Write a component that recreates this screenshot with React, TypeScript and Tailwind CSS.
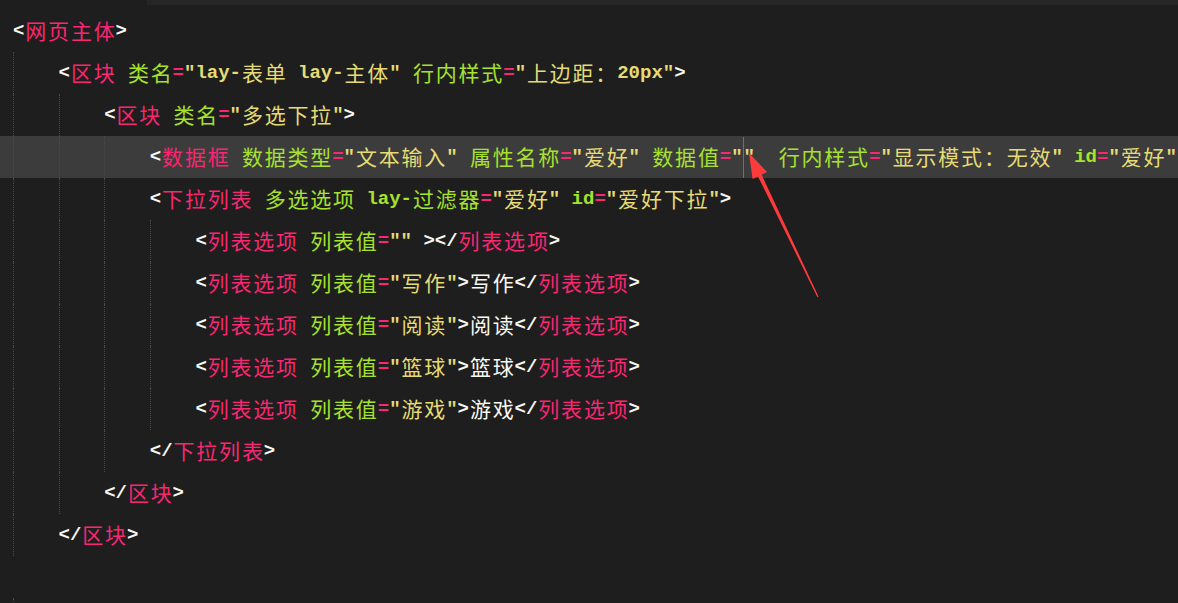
type Kind = "p" | "t" | "a" | "e" | "s" | "x" | "c";
type Tok = [Kind, string];

type Line = {
  level: number;
  guides: number;
  active?: boolean;
  toks: Tok[];
};

const colors: Record<Kind, string> = {
  p: "text-[#f8f8f2]",
  t: "text-[#f92672]",
  a: "text-[#a6e22e]",
  e: "text-[#f92672]",
  s: "text-[#e6db74]",
  x: "text-[#f8f8f2]",
  c: "",
};

const isWide = (ch: string) => /[\u3000-\u9fff\uff00-\uffef]/.test(ch);

const option = (v: string): Tok[] => [
  ["p", "<"],
  ["t", "列表选项"],
  ["p", " "],
  ["a", "列表值"],
  ["e", "="],
  ["s", `"${v}"`],
  ["p", ">"],
  ["x", v],
  ["p", "</"],
  ["t", "列表选项"],
  ["p", ">"],
];

const lines: Line[] = [
  { level: 0, guides: 0, toks: [["p", "<"], ["t", "网页主体"], ["p", ">"]] },
  {
    level: 1,
    guides: 1,
    toks: [
      ["p", "<"],
      ["t", "区块"],
      ["p", " "],
      ["a", "类名"],
      ["e", "="],
      ["s", '"lay-表单 lay-主体"'],
      ["p", " "],
      ["a", "行内样式"],
      ["e", "="],
      ["s", '"上边距：20px"'],
      ["p", ">"],
    ],
  },
  {
    level: 2,
    guides: 2,
    toks: [["p", "<"], ["t", "区块"], ["p", " "], ["a", "类名"], ["e", "="], ["s", '"多选下拉"'], ["p", ">"]],
  },
  {
    level: 3,
    guides: 3,
    active: true,
    toks: [
      ["p", "<"],
      ["t", "数据框"],
      ["p", " "],
      ["a", "数据类型"],
      ["e", "="],
      ["s", '"文本输入"'],
      ["p", " "],
      ["a", "属性名称"],
      ["e", "="],
      ["s", '"爱好"'],
      ["p", " "],
      ["a", "数据值"],
      ["e", "="],
      ["s", '"'],
      ["c", ""],
      ["s", '"'],
      ["p", "  "],
      ["a", "行内样式"],
      ["e", "="],
      ["s", '"显示模式：无效"'],
      ["p", " "],
      ["a", "id"],
      ["e", "="],
      ["s", '"爱好"'],
    ],
  },
  {
    level: 3,
    guides: 3,
    toks: [
      ["p", "<"],
      ["t", "下拉列表"],
      ["p", " "],
      ["a", "多选选项"],
      ["p", " "],
      ["a", "lay-过滤器"],
      ["e", "="],
      ["s", '"爱好"'],
      ["p", " "],
      ["a", "id"],
      ["e", "="],
      ["s", '"爱好下拉"'],
      ["p", ">"],
    ],
  },
  {
    level: 4,
    guides: 4,
    toks: [
      ["p", "<"],
      ["t", "列表选项"],
      ["p", " "],
      ["a", "列表值"],
      ["e", "="],
      ["s", '""'],
      ["p", " ></"],
      ["t", "列表选项"],
      ["p", ">"],
    ],
  },
  { level: 4, guides: 4, toks: option("写作") },
  { level: 4, guides: 4, toks: option("阅读") },
  { level: 4, guides: 4, toks: option("篮球") },
  { level: 4, guides: 4, toks: option("游戏") },
  { level: 3, guides: 3, toks: [["p", "</"], ["t", "下拉列表"], ["p", ">"]] },
  { level: 2, guides: 2, toks: [["p", "</"], ["t", "区块"], ["p", ">"]] },
  { level: 1, guides: 1, toks: [["p", "</"], ["t", "区块"], ["p", ">"]] },
  { level: 0, guides: 0, toks: [] },
  { level: 0, guides: 1, toks: [] },
];

// split a token into ascii runs and double-width CJK cells
const renderText = (text: string, cls: string, key: string) => {
  const out: React.ReactNode[] = [];
  let run = "";
  let n = 0;
  const flush = () => {
    if (run) {
      out.push(
        <span key={`${key}-r${n++}`} className={`${cls} font-bold`}>
          {run}
        </span>
      );
      run = "";
    }
  };
  for (const ch of text) {
    if (isWide(ch)) {
      flush();
      out.push(
        <span
          key={`${key}-w${n++}`}
          className={`${cls} inline-block w-[22.8px] text-center text-[21px] font-normal font-['Noto_Sans_CJK_SC',sans-serif]`}
        >
          {ch}
        </span>
      );
    } else {
      run += ch;
    }
  }
  flush();
  return out;
};

const CodeLine = ({ line }: { line: Line }) => {
  return (
    <div
      className={`flex h-[42px] items-stretch pl-[13px] ${
        line.active ? "bg-[#3c3c3c]" : ""
      }`}
    >
      {Array.from({ length: line.level }).map((_, i) => (
        <span
          key={i}
          className={`w-[45.6px] shrink-0 ${
            i < line.guides ? "border-l border-dotted border-[#4a4a4a]" : ""
          }`}
        />
      ))}
      {line.level === 0 && line.guides > 0 && (
        <span className="w-[45.6px] shrink-0 border-l border-dotted border-[#4a4a4a]" />
      )}
      <div className="flex items-center whitespace-pre">
        {line.toks.map(([k, txt], i) =>
          k === "c" ? (
            <span key={i} className="inline-block h-[41px] w-px bg-[#6e6e6e]" />
          ) : (
            renderText(txt, colors[k], String(i))
          )
        )}
      </div>
    </div>
  );
};

export default function App() {
  return (
    <div className="relative h-[603px] w-[1178px] overflow-hidden bg-[#1e1e1e] font-['Liberation_Mono','Noto_Sans_CJK_SC',monospace] text-[19px]">
      <div className="flex h-[5px]">
        <div className="w-[147px]" />
        <div className="flex-1 bg-[#262626]" />
      </div>
      <div className="pt-[5px]">
        {lines.map((l, i) => (
          <CodeLine key={i} line={l} />
        ))}
      </div>
      <svg className="pointer-events-none absolute left-0 top-0" width="1178" height="603">
        <polygon
          points="749,153 767,172 761.6,174.6 818.6,296.8 817.4,297.2 758,176.4 752.6,179"
          fill="#ff3a3a"
        />
      </svg>
    </div>
  );
}
